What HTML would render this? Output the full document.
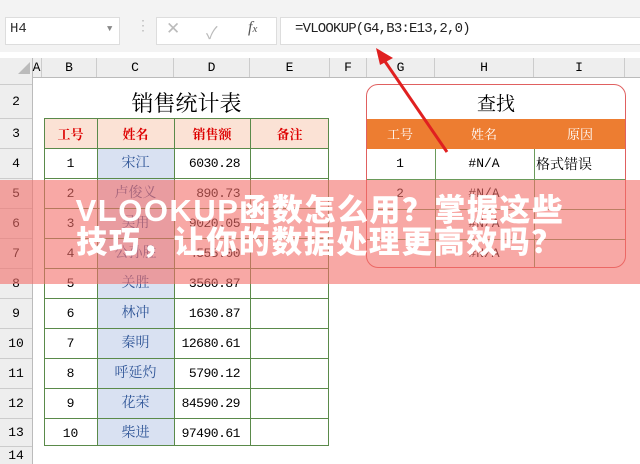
<!DOCTYPE html><html><head><meta charset="utf-8"><style>
body{margin:0;width:640px;height:464px;overflow:hidden;background:#fff;position:relative;font-family:"Liberation Mono","Noto Sans CJK SC",monospace}
.a{position:absolute}
.c{position:absolute;display:flex;align-items:center;justify-content:center;box-sizing:border-box;font-size:13px}
.cjk{font-family:"Liberation Serif","Noto Serif CJK SC",serif}
</style></head><body>
<div class="a" style="left:0;top:0;width:640px;height:52px;background:#f3f3f3"></div>
<div class="a" style="left:5px;top:17px;width:113px;height:26px;background:#fff;border:1px solid #ddd"></div>
<div class="a" style="left:10px;top:21px;font-size:14px;color:#333">H4</div>
<div class="a" style="left:107px;top:24px;font-size:9px;color:#888">▼</div>
<div class="a" style="left:136px;top:18px;font-size:14px;color:#bbb">⋮</div>
<div class="a" style="left:156px;top:17px;width:119px;height:26px;background:#fff;border:1px solid #ddd"></div>
<div class="a" style="left:166px;top:19px;font-size:17px;color:#bbb">✕</div>
<div class="a" style="left:206px;top:19px;font-size:17px;color:#bbb">✓</div>
<div class="a" style="left:248px;top:19px;font-size:16px;font-style:italic;font-family:'Liberation Serif',serif;color:#555">f<span style="font-size:11px">x</span></div>
<div class="a" style="left:280px;top:17px;width:360px;height:26px;background:#fff;border:1px solid #ddd"></div>
<div class="a" style="left:295px;top:21px;font-size:14px;color:#222;letter-spacing:-0.8px">=VLOOKUP(G4,B3:E13,2,0)</div>
<div class="a" style="left:0;top:58px;width:640px;height:19px;background:#eeeeee;border-bottom:1px solid #bbb"></div>
<div class="a" style="left:0;top:58px;width:32px;height:406px;background:#eeeeee;border-right:1px solid #bbb"></div>
<div class="a" style="left:18px;top:62px;width:0;height:0;border-left:12px solid transparent;border-bottom:12px solid #bbb"></div>
<div class="c" style="left:32px;top:58px;width:10px;height:19px;border-right:1px solid #ccc">A</div>
<div class="c" style="left:42px;top:58px;width:55px;height:19px;border-right:1px solid #ccc">B</div>
<div class="c" style="left:97px;top:58px;width:77px;height:19px;border-right:1px solid #ccc">C</div>
<div class="c" style="left:174px;top:58px;width:76px;height:19px;border-right:1px solid #ccc">D</div>
<div class="c" style="left:250px;top:58px;width:80px;height:19px;border-right:1px solid #ccc">E</div>
<div class="c" style="left:330px;top:58px;width:37px;height:19px;border-right:1px solid #ccc">F</div>
<div class="c" style="left:367px;top:58px;width:68px;height:19px;border-right:1px solid #ccc">G</div>
<div class="c" style="left:435px;top:58px;width:99px;height:19px;border-right:1px solid #ccc">H</div>
<div class="c" style="left:534px;top:58px;width:91px;height:19px;border-right:1px solid #ccc">I</div>
<div class="c" style="left:0;top:84px;width:32px;height:34px;border-top:1px solid #ccc">2</div>
<div class="c" style="left:0;top:118px;width:32px;height:30px;border-top:1px solid #ccc">3</div>
<div class="c" style="left:0;top:148px;width:32px;height:30px;border-top:1px solid #ccc">4</div>
<div class="c" style="left:0;top:178px;width:32px;height:30px;border-top:1px solid #ccc">5</div>
<div class="c" style="left:0;top:208px;width:32px;height:30px;border-top:1px solid #ccc">6</div>
<div class="c" style="left:0;top:238px;width:32px;height:30px;border-top:1px solid #ccc">7</div>
<div class="c" style="left:0;top:268px;width:32px;height:30px;border-top:1px solid #ccc">8</div>
<div class="c" style="left:0;top:298px;width:32px;height:30px;border-top:1px solid #ccc">9</div>
<div class="c" style="left:0;top:328px;width:32px;height:30px;border-top:1px solid #ccc">10</div>
<div class="c" style="left:0;top:358px;width:32px;height:30px;border-top:1px solid #ccc">11</div>
<div class="c" style="left:0;top:388px;width:32px;height:30px;border-top:1px solid #ccc">12</div>
<div class="c" style="left:0;top:418px;width:32px;height:28px;border-top:1px solid #ccc">13</div>
<div class="c" style="left:0;top:446px;width:32px;height:18px;border-top:1px solid #ccc">14</div>
<div class="c cjk" style="left:44px;top:86px;width:285px;height:32px;font-size:22px">销售统计表</div>
<div class="a" style="left:44px;top:118px;width:285px;height:30px;background:#fbe2d5"></div>
<div class="a" style="left:97px;top:148px;width:77px;height:298px;background:#d9e1f2"></div>
<div class="a" style="left:44px;top:118px;width:285px;height:328px;border:1px solid #5a8a4a;box-sizing:border-box;
background-image:repeating-linear-gradient(to bottom,transparent 0 29px,#5a8a4a 29px 30px)"></div>
<div class="a" style="left:97px;top:118px;width:1px;height:328px;background:#5a8a4a"></div>
<div class="a" style="left:174px;top:118px;width:1px;height:328px;background:#5a8a4a"></div>
<div class="a" style="left:250px;top:118px;width:1px;height:328px;background:#5a8a4a"></div>
<div class="c cjk" style="left:44px;top:118px;width:53px;height:30px;color:#d00;font-weight:bold">工号</div>
<div class="c cjk" style="left:97px;top:118px;width:77px;height:30px;color:#d00;font-weight:bold">姓名</div>
<div class="c cjk" style="left:174px;top:118px;width:76px;height:30px;color:#d00;font-weight:bold">销售额</div>
<div class="c cjk" style="left:250px;top:118px;width:79px;height:30px;color:#d00;font-weight:bold">备注</div>
<div class="a" style="left:44px;top:149px;width:53px;font-size:13px;line-height:30px;text-align:center">1<br>2<br>3<br>4<br>5<br>6<br>7<br>8<br>9<br>10</div>
<div class="a cjk" style="left:97px;top:149px;width:77px;font-size:14px;line-height:30px;text-align:center;color:#2f5597">宋江<br>卢俊义<br>吴用<br>公孙胜<br>关胜<br>林冲<br>秦明<br>呼延灼<br>花荣<br>柴进</div>
<div class="a" style="left:174px;top:149px;width:66px;font-size:13px;line-height:30px;text-align:right;letter-spacing:-0.5px">6030.28<br>890.73<br>9020.05<br>4555.00<br>3560.87<br>1630.87<br>12680.61<br>5790.12<br>84590.29<br>97490.61</div>
<div class="a" style="left:366px;top:84px;width:260px;height:184px;border:1px solid #e06060;border-radius:12px;box-sizing:border-box;overflow:hidden">
<div class="a" style="left:0;top:34px;width:260px;height:30px;background:#ed7d31"></div>
<div class="a" style="left:0;top:94px;width:260px;height:1px;background:#6a9a5a"></div>
<div class="a" style="left:0;top:124px;width:260px;height:1px;background:#6a9a5a"></div>
<div class="a" style="left:0;top:154px;width:260px;height:1px;background:#6a9a5a"></div>
<div class="a" style="left:68px;top:64px;width:1px;height:120px;background:#6a9a5a"></div>
<div class="a" style="left:167px;top:64px;width:1px;height:120px;background:#6a9a5a"></div>
</div>
<div class="c cjk" style="left:366px;top:86px;width:260px;height:32px;font-size:19px">查找</div>
<div class="c cjk" style="left:366px;top:118px;width:68px;height:30px;color:#fff">工号</div>
<div class="c cjk" style="left:434px;top:118px;width:100px;height:30px;color:#fff">姓名</div>
<div class="c cjk" style="left:534px;top:118px;width:92px;height:30px;color:#fff">原因</div>
<div class="c" style="left:366px;top:148px;width:68px;height:30px">1</div>
<div class="c" style="left:434px;top:148px;width:100px;height:30px">#N/A</div>
<div class="a cjk" style="left:536px;top:154px;font-size:14px">格式错误</div>
<div class="c" style="left:366px;top:178px;width:68px;height:30px">2</div>
<div class="c" style="left:434px;top:178px;width:100px;height:30px">#N/A</div>
<div class="c" style="left:434px;top:208px;width:100px;height:30px">#N/A</div>
<div class="c" style="left:434px;top:238px;width:100px;height:30px">#N/A</div>
<svg class="a" style="left:0;top:0" width="640" height="464"><line x1="447" y1="152" x2="384" y2="60" stroke="#e02020" stroke-width="3"/><polygon points="376,48 393,58 380,65" fill="#e02020"/></svg>
<div class="a" style="left:0;top:180px;width:640px;height:104px;background:rgba(243,110,105,0.6)"></div>
<div class="a" style="left:0;top:195px;width:640px;text-align:center;color:#fff;font-weight:900;font-size:31px;line-height:32px;font-family:'Liberation Sans','Noto Sans CJK SC',sans-serif;letter-spacing:1.5px">VLOOKUP函数怎么用？掌握这些<br>技巧，让你的数据处理更高效吗？</div>
</body></html>
